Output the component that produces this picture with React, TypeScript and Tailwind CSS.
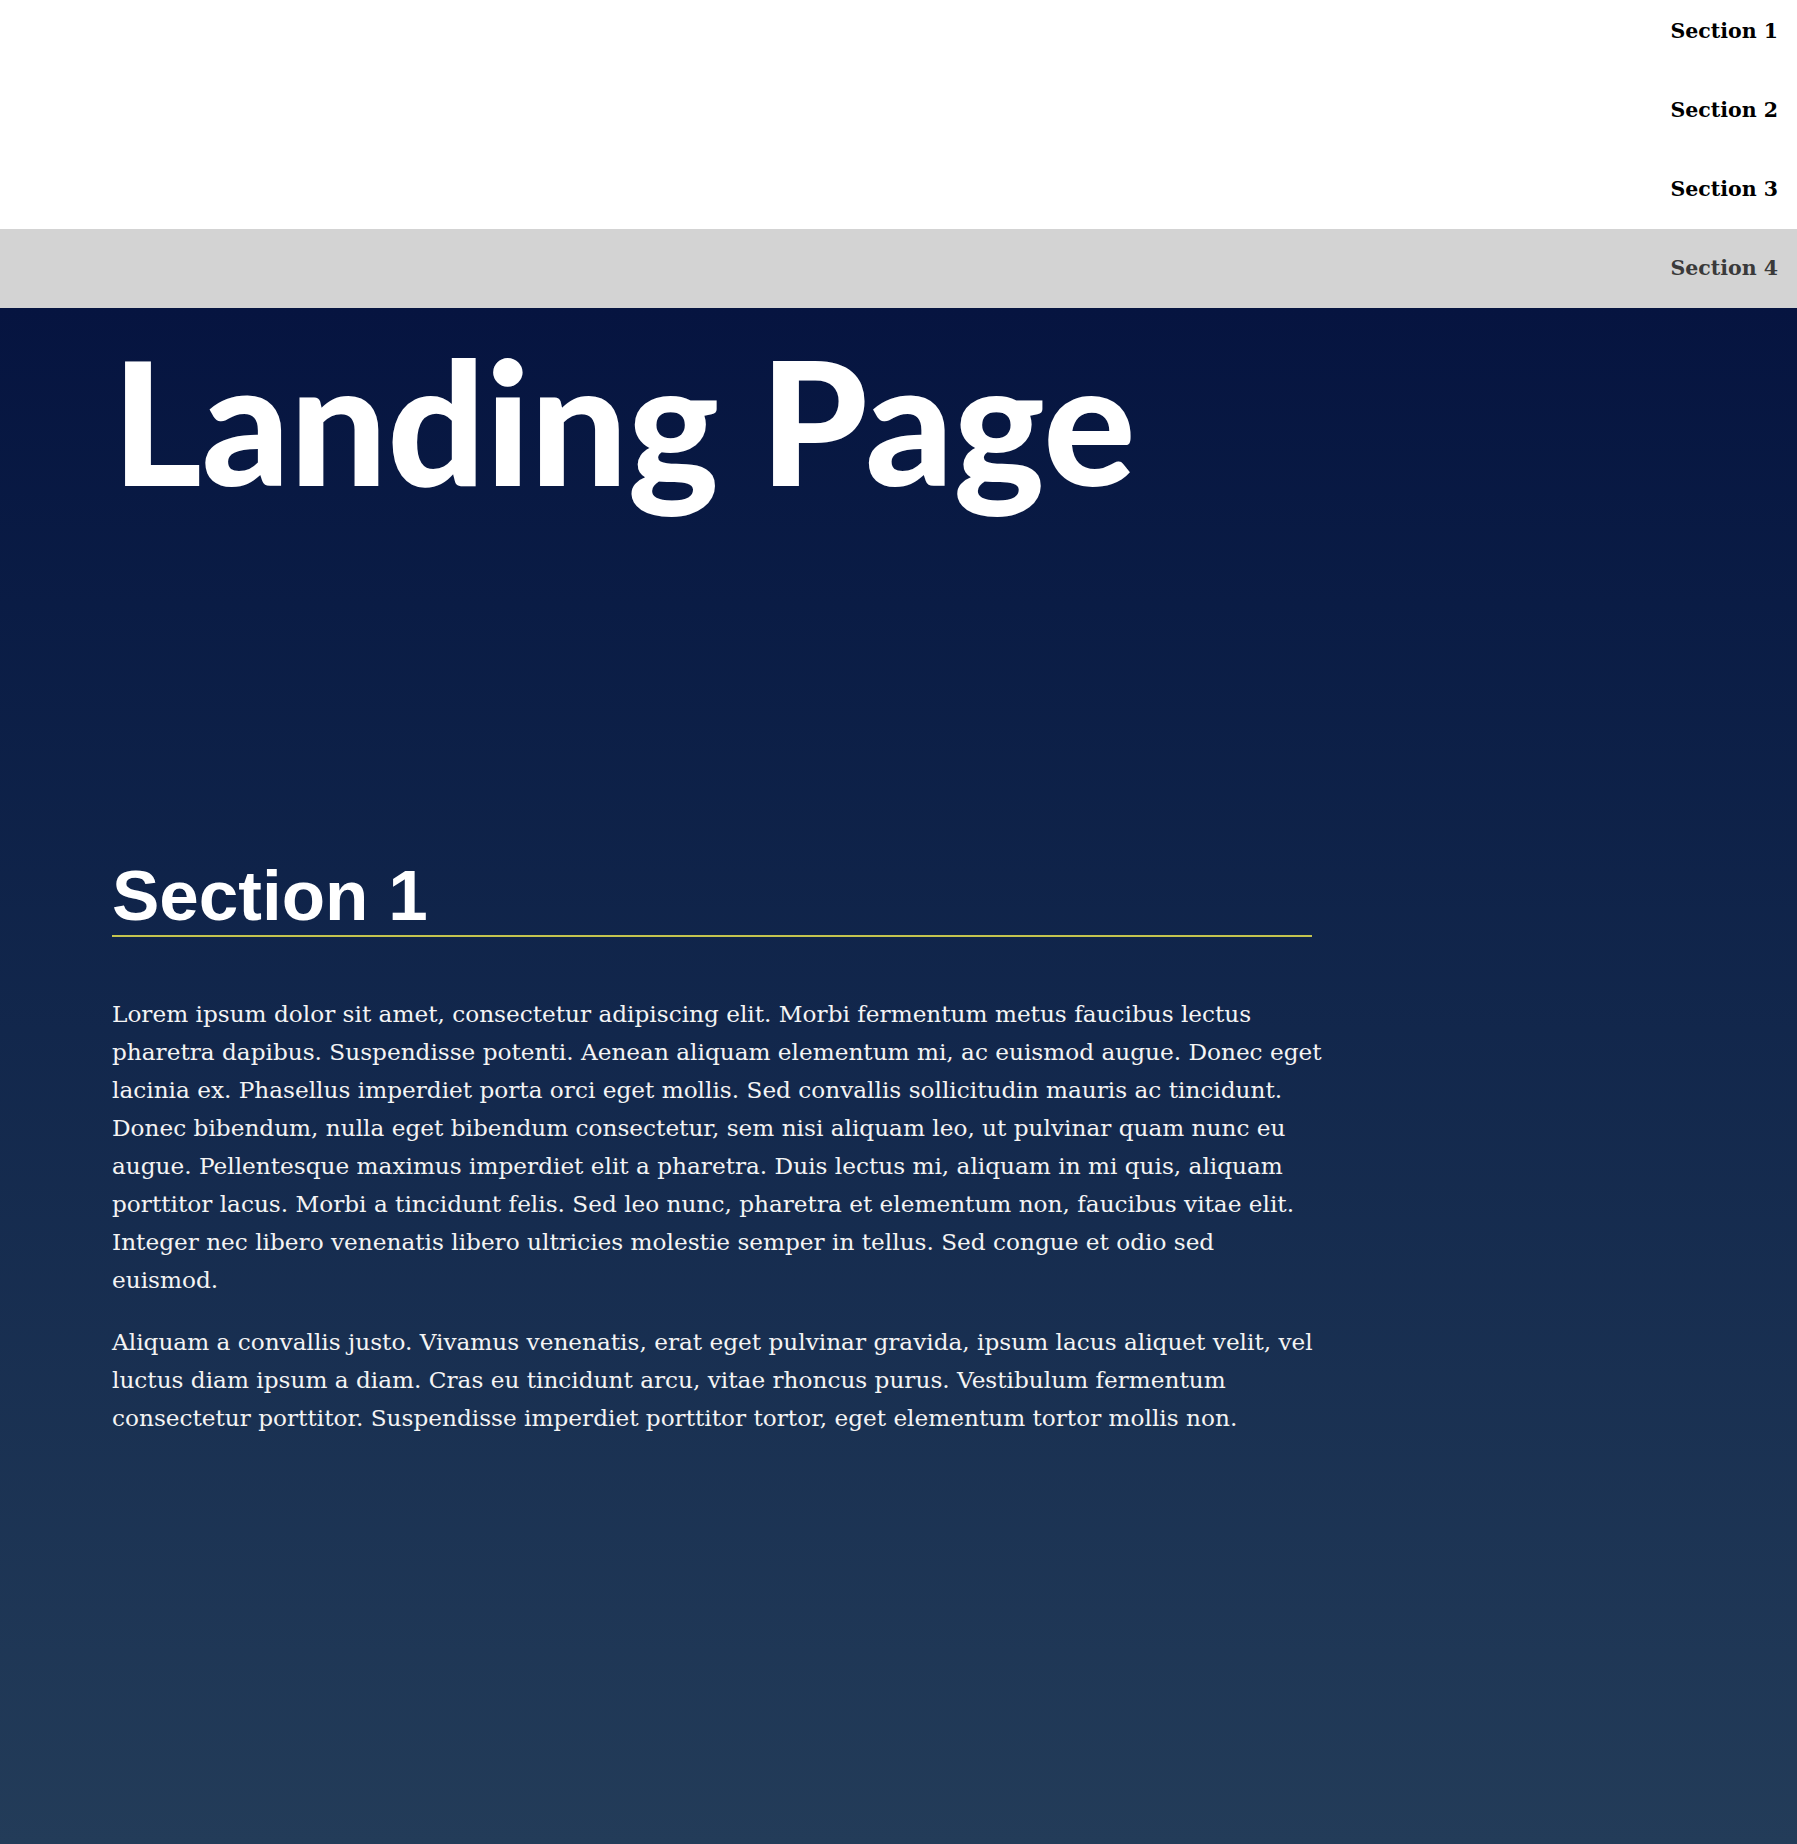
const p1 = [
  "Lorem ipsum dolor sit amet, consectetur adipiscing elit. Morbi fermentum metus faucibus lectus",
  "pharetra dapibus. Suspendisse potenti. Aenean aliquam elementum mi, ac euismod augue. Donec eget",
  "lacinia ex. Phasellus imperdiet porta orci eget mollis. Sed convallis sollicitudin mauris ac tincidunt.",
  "Donec bibendum, nulla eget bibendum consectetur, sem nisi aliquam leo, ut pulvinar quam nunc eu",
  "augue. Pellentesque maximus imperdiet elit a pharetra. Duis lectus mi, aliquam in mi quis, aliquam",
  "porttitor lacus. Morbi a tincidunt felis. Sed leo nunc, pharetra et elementum non, faucibus vitae elit.",
  "Integer nec libero venenatis libero ultricies molestie semper in tellus. Sed congue et odio sed",
  "euismod.",
];

const p2 = [
  "Aliquam a convallis justo. Vivamus venenatis, erat eget pulvinar gravida, ipsum lacus aliquet velit, vel",
  "luctus diam ipsum a diam. Cras eu tincidunt arcu, vitae rhoncus purus. Vestibulum fermentum",
  "consectetur porttitor. Suspendisse imperdiet porttitor tortor, eget elementum tortor mollis non.",
];

const navItems = ["Section 1", "Section 2", "Section 3", "Section 4"];

export default function App() {
  return (
    <div className="flex min-h-[1844px] w-full flex-col bg-white font-['DejaVu_Serif',serif]">
      <header className="bg-white">
        <nav>
          <ul className="m-0 flex list-none flex-col p-0 text-right">
            {navItems.map((item, i) => (
              <li key={item}>
                <a
                  href={`#section${i + 1}`}
                  className={
                    i === 0
                      ? "block pb-[24px] pr-[19px] pt-[16px] text-[20.5px] font-bold leading-[31px] text-black no-underline"
                      : i === 3
                      ? "block bg-[#d3d3d3] py-[24px] pr-[19px] text-[20.5px] font-bold leading-[31px] text-[#3a3a3a] no-underline"
                      : "block py-[24px] pr-[19px] text-[20.5px] font-bold leading-[31px] text-black no-underline"
                  }
                >
                  {item}
                </a>
              </li>
            ))}
          </ul>
        </nav>
      </header>

      <main className="flex h-[1536px] flex-col bg-gradient-to-b from-[#061440] to-[#233c59] pl-[112px] pt-[26px] text-white">
        <h1 className="m-0 whitespace-nowrap font-['Lato',sans-serif] text-[172px] font-black leading-[172px] text-white">
          Landing Page
        </h1>

        <section className="mt-[354px] w-[1200px]">
          <h2 className="m-0 border-b-2 border-[#c4c44f] pb-[3px] font-['Liberation_Sans',Arial,sans-serif] text-[71px] font-bold leading-[72px] text-white">
            Section 1
          </h2>
          <p className="mt-[58px] text-[23.2px] leading-[38px] text-[#f4f4f4]">
            {p1.map((l) => (
              <span key={l} className="block whitespace-nowrap">
                {l}
              </span>
            ))}
          </p>
          <p className="mt-[24px] text-[23.2px] leading-[38px] text-[#f4f4f4]">
            {p2.map((l) => (
              <span key={l} className="block whitespace-nowrap">
                {l}
              </span>
            ))}
          </p>
        </section>
      </main>
    </div>
  );
}
